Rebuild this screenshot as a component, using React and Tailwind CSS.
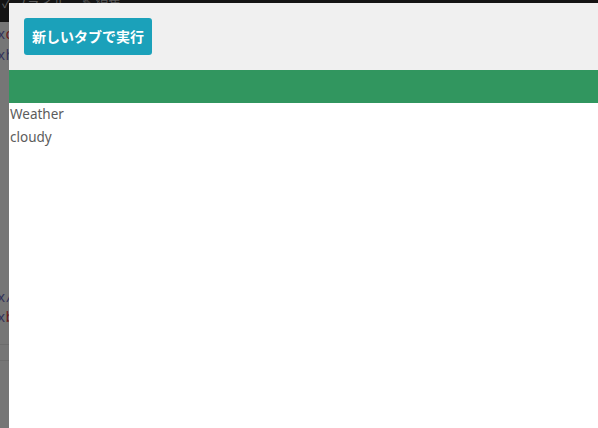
import React from 'react';

const BackgroundEditor = () => (
  <div className="absolute inset-0 bg-[#767676] font-['Liberation_Mono',monospace] text-[14px]">
    {/* dimmed top toolbar */}
    <div className="h-[22px] bg-[#141414] text-[#5a5a5a] text-[13px] leading-[6px] whitespace-nowrap pl-[2px] font-['Noto_Sans_CJK_JP',sans-serif]">
      ✓ ファイル　 ✎ 編集
    </div>
    <div className="pl-0 pt-[3px] leading-[21px] text-[#33335a]">
      <div className="-ml-[3px]">x<span className="text-[#6a1a1a]">cm</span></div>
      <div className="-ml-[3px]">xh</div>
    </div>
    <div className="mt-[221px] leading-[20px] text-[#33335a]">
      <div className="-ml-[3px]">x/</div>
      <div className="-ml-[3px]">x<span className="text-[#6a1a1a]">b</span></div>
    </div>
    <div className="mt-[16px] border-t border-[#6c6c6c] h-[16px]" />
    <div className="border-t border-[#6c6c6c]" />
  </div>
);

export default function App() {
  return (
    <div className="relative w-[598px] h-[428px] overflow-hidden">
      <BackgroundEditor />
      <div className="absolute left-[9px] top-[3px] right-0 bottom-0 bg-white flex flex-col">
        <div className="h-[67px] bg-[#f0f0f0] flex items-center pl-[15px]">
          <button className="h-[37px] w-[128px] rounded-[3px] bg-[#1ba1ba] text-white text-[14px] font-bold font-['Noto_Sans_CJK_JP',sans-serif]">
            新しいタブで実行
          </button>
        </div>
        <div className="h-[33px] bg-[#31965f]" />
        <div className="pl-[1px] text-[13.5px] leading-[23px] text-[#5c5c5c] font-['Noto_Sans','Open_Sans',sans-serif]">
          <div>Weather</div>
          <div>cloudy</div>
        </div>
      </div>
    </div>
  );
}
